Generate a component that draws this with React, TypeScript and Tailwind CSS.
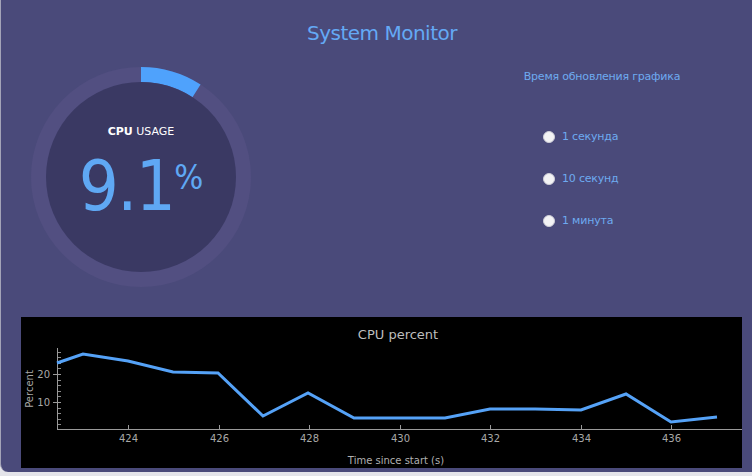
import React from "react";

const pts: [number, number][] = [
  [36, 46], [62, 37], [107, 44], [152, 55], [197, 56], [242, 99], [287, 76],
  [333, 101], [378, 101], [424, 101], [469, 92], [514, 92], [560, 93],
  [605, 77], [650, 105], [696, 100],
];

function Chart() {
  const xt = [424, 426, 428, 430, 432, 434, 436];
  const yv = (v: number) => 113 - 2.8 * v;
  const minor = [2, 4, 6, 8, 12, 14, 16, 18, 22, 24, 26, 28];
  return (
    <svg width="721" height="151" viewBox="0 0 721 151" className="block">
      <text x="377" y="22" textAnchor="middle" fontFamily="DejaVu Sans, sans-serif" fontSize="13" fill="#bdbdbd">CPU percent</text>
      <line x1="36.5" y1="31" x2="36.5" y2="113" stroke="#9a9a9a" strokeWidth="1" />
      <line x1="36" y1="112.5" x2="721" y2="112.5" stroke="#9a9a9a" strokeWidth="1" />
      {minor.map((v) => (
        <line key={v} x1="37" y1={Math.round(yv(v)) + 0.5} x2="40" y2={Math.round(yv(v)) + 0.5} stroke="#8a8a8a" strokeWidth="1" />
      ))}
      {[10, 20].map((v) => (
        <g key={v}>
          <line x1="32" y1={Math.round(yv(v)) + 0.5} x2="40" y2={Math.round(yv(v)) + 0.5} stroke="#9a9a9a" strokeWidth="1" />
          <text x="29" y={yv(v) + 4} textAnchor="end" fontFamily="DejaVu Sans, sans-serif" fontSize="10" fill="#a8a8a8">{v}</text>
        </g>
      ))}
      {xt.map((t) => {
        const x = Math.round(107 + (t - 424) * 45.25) + 0.5;
        return (
          <g key={t}>
            <line x1={x} y1="108" x2={x} y2="112" stroke="#9a9a9a" strokeWidth="1" />
            <text x={x} y="125" textAnchor="middle" fontFamily="DejaVu Sans, sans-serif" fontSize="10" fill="#a8a8a8">{t}</text>
          </g>
        );
      })}
      <text x="0" y="0" transform="translate(12 72) rotate(-90)" textAnchor="middle" fontFamily="DejaVu Sans, sans-serif" fontSize="10" fill="#a8a8a8">Percent</text>
      <text x="375" y="147" textAnchor="middle" fontFamily="DejaVu Sans, sans-serif" fontSize="10" fill="#b0b0b0">Time since start (s)</text>
      <polyline points={pts.map((p) => p.join(",")).join(" ")} fill="none" stroke="#55a2f7" strokeWidth="3" strokeLinejoin="miter" />
    </svg>
  );
}

function Gauge() {
  const r = 102.5;
  const c = 2 * Math.PI * r;
  const pct = 9.1;
  return (
    <div className="relative w-[220px] h-[220px] rounded-full bg-[#524f81] flex items-center justify-center">
      <svg width="220" height="220" className="absolute left-0 top-0" viewBox="0 0 220 220">
        <circle cx="110" cy="110" r={r} fill="none" stroke="#4fa2fc" strokeWidth="15" strokeDasharray={`${(c * pct) / 100} ${c}`} transform="rotate(-90 110 110)" />
      </svg>
      <div className="relative w-[190px] h-[190px] rounded-full bg-[#3a3963] flex flex-col items-center pt-[43px]">
        <div className="text-[11px] leading-[13px] text-white">
          <span className="font-bold">CPU</span> USAGE
        </div>
        <div className="flex items-start mt-[13px] text-[#5fa8f4] font-['DejaVu_Sans_Condensed',sans-serif]">
          <span className="text-[70px] leading-[70px] tracking-[-1.5px]">9.1</span>
          <span className="text-[34px] leading-[34px] mt-[9px]">%</span>
        </div>
      </div>
    </div>
  );
}

function Radio({ label }: { label: string }) {
  return (
    <label className="flex items-center gap-[7px] h-[13px]">
      <span className="w-[12px] h-[12px] rounded-full bg-[#f3f3f5] border border-[#cfcfd8]" />
      <span className="text-[11px] leading-[13px] text-[#6eaaf0] tracking-[-0.2px]">{label}</span>
    </label>
  );
}

export default function App() {
  return (
    <div className="w-[752px] h-[476px] overflow-hidden bg-[#e4e4ea] font-['DejaVu_Sans',sans-serif]">
      <div className="w-[763px] h-[472px] bg-[#4a4a7a] border-l border-[#a4a4b8] rounded-bl-[8px] flex flex-col">
        <h1 className="h-[66px] flex items-center justify-center text-[20px] tracking-[-0.5px] text-[#64a9f5]">
          System Monitor
        </h1>
        <div className="flex h-[251px]">
          <div className="ml-[30px] mt-[1px]">
            <Gauge />
          </div>
          <div className="ml-[201px] w-[300px] flex flex-col">
            <div className="mt-[4px] text-center text-[11px] leading-[13px] tracking-[-0.2px] text-[#6eaaf0]">
              Время обновления графика
            </div>
            <div className="ml-[91px] mt-[47px] flex flex-col gap-[29px]">
              <Radio label="1 секунда" />
              <Radio label="10 секунд" />
              <Radio label="1 минута" />
            </div>
          </div>
        </div>
        <div className="ml-[20px] w-[721px] h-[151px] bg-black">
          <Chart />
        </div>
      </div>
    </div>
  );
}
